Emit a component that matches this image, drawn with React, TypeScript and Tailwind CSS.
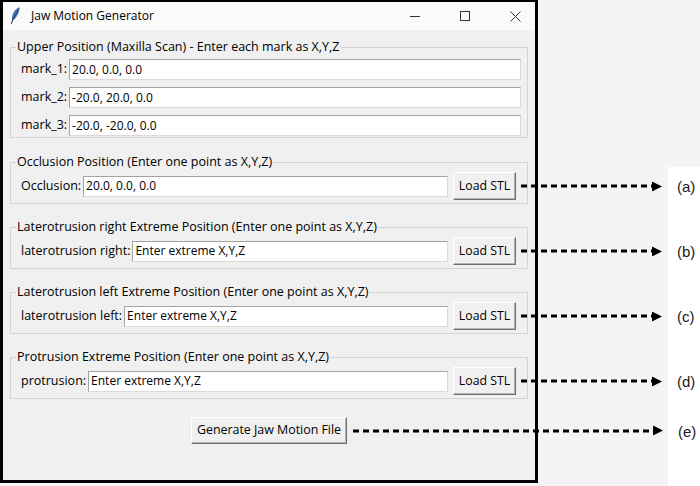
const dashes =
  'h-[3px] bg-[repeating-linear-gradient(90deg,#000_0_6px,transparent_6px_10px)]'

function Callout({ length, tag }: { length: string; tag: string }) {
  return (
    <div className="pointer-events-none absolute top-1/2 left-[calc(100%+5px)] flex -translate-y-1/2 items-center">
      <div className={`${dashes} ${length}`} />
      <svg width="10" height="10" viewBox="0 0 10 10" className="shrink-0">
        <polygon points="0,0 10,5 0,10" fill="#000" />
      </svg>
      <span className="ml-[15px] font-['Liberation_Sans',Arial,sans-serif] text-[15px] leading-none text-[#1a1a1a]">
        {tag}
      </span>
    </div>
  )
}

function Entry({ value }: { value: string }) {
  return (
    <div className="flex h-[21px] min-w-0 flex-1 items-center border border-[#dadada] border-t-[#a3a3a3] border-l-[#a3a3a3] bg-white pl-[2px] text-[12px] text-black">
      {value}
    </div>
  )
}

function LoadButton({ tag }: { tag: string }) {
  return (
    <div className="relative ml-[5px] shrink-0">
      <button className="flex h-[28px] w-[63px] items-center justify-center border border-t-white border-l-white border-r-[#6e6e6e] border-b-[#6e6e6e] bg-[#f0f0f0] text-[12.3px] text-black shadow-[inset_-1px_-1px_0_#b4b4b4]">
        Load STL
      </button>
      <Callout length="w-[131px]" tag={tag} />
    </div>
  )
}

function Group({ title, children, className = '' }: { title: string; children: React.ReactNode; className?: string }) {
  return (
    <fieldset className={`border border-[#d4d4d4] px-[5px] ${className}`}>
      <legend className="px-[1px] text-[12.5px] leading-[16px] text-black">{title}</legend>
      {children}
    </fieldset>
  )
}

const points = [
  { title: 'Occlusion Position (Enter one point as X,Y,Z)', label: 'Occlusion:', value: '20.0, 0.0, 0.0', tag: '(a)' },
  { title: 'Laterotrusion right Extreme Position (Enter one point as X,Y,Z)', label: 'laterotrusion right:', value: 'Enter extreme X,Y,Z', tag: '(b)' },
  { title: 'Laterotrusion left Extreme Position (Enter one point as X,Y,Z)', label: 'laterotrusion left:', value: 'Enter extreme X,Y,Z', tag: '(c)' },
  { title: 'Protrusion Extreme Position (Enter one point as X,Y,Z)', label: 'protrusion:', value: 'Enter extreme X,Y,Z', tag: '(d)' },
]

const marks = [
  ['mark_1:', '20.0, 0.0, 0.0'],
  ['mark_2:', '-20.0, 20.0, 0.0'],
  ['mark_3:', '-20.0, -20.0, 0.0'],
]

// tk feather icon
function Feather() {
  return (
    <svg width="10" height="18" viewBox="0 0 10 18" className="shrink-0">
      <path d="M9.2 0.8 C5 2.6 2.3 7 2.3 13.6 C5.2 11.6 8.2 7.2 9.2 0.8 Z" fill="#4a80c8" stroke="#1f4a85" strokeWidth="0.8" />
      <path d="M8 3.2 L3 12.4 L1.2 17.2" fill="none" stroke="#1b3766" strokeWidth="1" />
    </svg>
  )
}

export default function App() {
  return (
    <div className="flex h-[486px] w-[700px] bg-[#f4f4f4] font-['Open_Sans',sans-serif]">
      <div className="flex h-[483px] w-[538px] shrink-0 flex-col border-x-[3px] border-t-2 border-b-[3px] border-black bg-[#f0f0f0]">
        <div className="flex h-[28px] shrink-0 items-center bg-[#fafaf9] pl-[7px] pr-[14px]">
          <Feather />
          <span className="ml-[11px] text-[12px] text-black">Jaw Motion Generator</span>
          <div className="ml-auto flex items-center gap-[40px] text-[#222]">
            <div className="h-px w-[10px] bg-[#333]" />
            <div className="h-[10px] w-[10px] border border-[#333]" />
            <svg width="11" height="11" viewBox="0 0 11 11">
              <path d="M0.5 0.5 L10.5 10.5 M10.5 0.5 L0.5 10.5" stroke="#333" strokeWidth="1" />
            </svg>
          </div>
        </div>

        <div className="flex flex-1 flex-col px-[7px] pt-[9px]">
          <Group title="Upper Position (Maxilla Scan) - Enter each mark as X,Y,Z" className="pt-[4px] pb-[1px]">
            <div className="flex flex-col gap-[7px] pr-[1px] pl-[5px]">
              {marks.map(([label, value]) => (
                <div key={label} className="flex items-center">
                  <span className="pr-[2px] text-[12.5px] text-black">{label}</span>
                  <Entry value={value} />
                </div>
              ))}
            </div>
          </Group>

          {points.map((p, i) => (
            <Group key={p.tag} title={p.title} className={`${i === 0 ? 'mt-[16px]' : 'mt-[15px]'} pt-[2px] pb-[3px]`}>
              <div className="flex h-[28px] items-center pr-[6px] pl-[5px]">
                <span className="pr-[2px] text-[12.5px] whitespace-nowrap text-black">{p.label}</span>
                <Entry value={p.value} />
                <LoadButton tag={p.tag} />
              </div>
            </Group>
          ))}

          <div className="relative mx-auto mt-[18px]">
            <button className="flex h-[27px] w-[156px] items-center justify-center border border-t-white border-l-white border-r-[#6e6e6e] border-b-[#6e6e6e] bg-[#f0f0f0] text-[12.4px] text-black shadow-[inset_-1px_-1px_0_#b4b4b4]">
              Generate Jaw Motion File
            </button>
            <div className="pointer-events-none absolute top-1/2 left-[calc(100%+6px)] flex -translate-y-1/2 items-center">
              <div className={`${dashes} w-[300px]`} />
              <svg width="10" height="10" viewBox="0 0 10 10" className="shrink-0">
                <polygon points="0,0 10,5 0,10" fill="#000" />
              </svg>
              <span className="ml-[15px] font-['Liberation_Sans',Arial,sans-serif] text-[15px] leading-none text-[#1a1a1a]">
                (e)
              </span>
            </div>
          </div>
        </div>
      </div>

      <div className="flex flex-1 flex-col">
        <div className="h-[167px] shrink-0" />
        <div className="ml-auto w-[32px] flex-1 bg-white" />
      </div>
    </div>
  )
}
